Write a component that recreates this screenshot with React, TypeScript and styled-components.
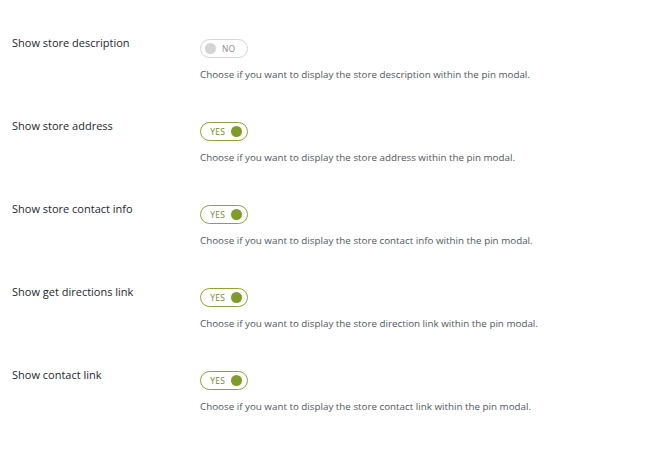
import React, { useState } from 'react';
import styled, { createGlobalStyle, css } from 'styled-components';

const GlobalStyle = createGlobalStyle`
    html, body {
        margin: 0;
        padding: 0;
        background: #ffffff;
        overflow: hidden;
    }
    body {
        font-family: 'Open Sans', 'Noto Sans', sans-serif;
        color: #23282d;
    }
`;

const SettingsTable = styled.div`
    display: flex;
    flex-direction: column;
    padding: 19px 0 0 12px;
`;

const SettingRow = styled.div`
    display: grid;
    grid-template-columns: 188px 1fr;
    padding: 16px 0 20px;
`;

const Label = styled.div`
    font-size: 11px;
    line-height: 16px;
    color: #23282d;
`;

const Field = styled.div`
    display: flex;
    flex-direction: column;
    align-items: flex-start;
    padding-top: 4px;
`;

const Toggle = styled.button<{ on: boolean }>`
    display: flex;
    align-items: center;
    gap: 6px;
    box-sizing: border-box;
    width: 48px;
    height: 19px;
    padding: 0 4px;
    border-radius: 10px;
    background: #fff;
    cursor: pointer;
    font-family: inherit;
    font-size: 8.5px;
    letter-spacing: 0.2px;
    ${(props) =>
        props.on
            ? css`
                  justify-content: flex-end;
                  border: 1px solid #8ba43a;
                  color: #6f8a1f;
                  padding: 0 5px 0 7px;
              `
            : css`
                  justify-content: flex-start;
                  border: 1px solid #d6d6d6;
                  color: #8c8c8c;
              `}
`;

const Knob = styled.span<{ on: boolean }>`
    width: 11px;
    height: 11px;
    border-radius: 50%;
    flex-shrink: 0;
    background: ${(props) => (props.on ? '#7f9b2a' : '#d4d4d4')};
`;

const Description = styled.p`
    margin: 10px 0 0;
    font-size: 9.8px;
    line-height: 14px;
    color: #50575e;
`;

interface Setting {
    key: string;
    label: string;
    text: string;
    value: boolean;
}

const initialSettings: Setting[] = [
    { key: 'desc', label: 'Show store description', text: 'store description', value: false },
    { key: 'addr', label: 'Show store address', text: 'store address', value: true },
    { key: 'contact', label: 'Show store contact info', text: 'store contact info', value: true },
    { key: 'dir', label: 'Show get directions link', text: 'store direction link', value: true },
    { key: 'link', label: 'Show contact link', text: 'store contact link', value: true },
];

function App() {
    const [settings, setSettings] = useState(initialSettings);

    const handleToggle = (key: string) => {
        setSettings((prev) => prev.map((s) => (s.key === key ? { ...s, value: !s.value } : s)));
    };

    return (
        <>
            <GlobalStyle />
            <SettingsTable>
                {settings.map((s) => (
                    <SettingRow key={s.key}>
                        <Label>{s.label}</Label>
                        <Field>
                            <Toggle on={s.value} onClick={() => handleToggle(s.key)}>
                                {s.value ? (
                                    <>
                                        YES
                                        <Knob on />
                                    </>
                                ) : (
                                    <>
                                        <Knob on={false} />
                                        NO
                                    </>
                                )}
                            </Toggle>
                            <Description>
                                Choose if you want to display the {s.text} within the pin modal.
                            </Description>
                        </Field>
                    </SettingRow>
                ))}
            </SettingsTable>
        </>
    );
}

export default App;
